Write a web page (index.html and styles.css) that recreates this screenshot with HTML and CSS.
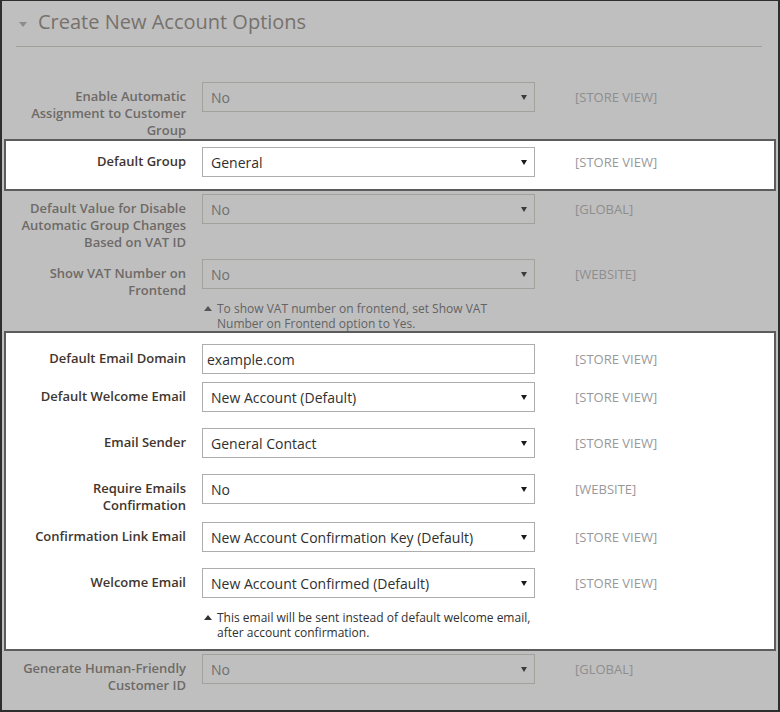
FILE: index.html
```html
<!DOCTYPE html>
<html lang="en">
<head>
<meta charset="utf-8">
<title>Create New Account Options</title>
<link rel="stylesheet" href="styles.css">
</head>
<body>
<div class="frame">
  <div class="header">
    <span class="caret"></span>
    <h2 class="title">Create New Account Options</h2>
  </div>
  <div class="rows">
    <div class="row row--flush">
      <div class="label">Enable Automatic<br>Assignment to Customer<br>Group</div>
      <div class="control"><div class="select"><span>No</span><span class="arrow"></span></div></div>
      <div class="scope">[STORE VIEW]</div>
    </div>

    <div class="box box--group">
      <div class="row row--flush">
        <div class="label">Default Group</div>
        <div class="control"><div class="select"><span>General</span><span class="arrow"></span></div></div>
        <div class="scope">[STORE VIEW]</div>
      </div>
    </div>

    <div class="row">
      <div class="label">Default Value for Disable<br>Automatic Group Changes<br>Based on VAT ID</div>
      <div class="control"><div class="select"><span>No</span><span class="arrow"></span></div></div>
      <div class="scope">[GLOBAL]</div>
    </div>

    <div class="row row--flush">
      <div class="label">Show VAT Number on<br>Frontend</div>
      <div class="control">
        <div class="select"><span>No</span><span class="arrow"></span></div>
        <div class="note"><span class="note-icon"></span><span>To show VAT number on frontend, set Show VAT<br>Number on Frontend option to Yes.</span></div>
      </div>
      <div class="scope">[WEBSITE]</div>
    </div>

    <div class="box box--email">
      <div class="row row--tight">
        <div class="label">Default Email Domain</div>
        <div class="control"><div class="input">example.com</div></div>
        <div class="scope">[STORE VIEW]</div>
      </div>
      <div class="row">
        <div class="label">Default Welcome Email</div>
        <div class="control"><div class="select"><span>New Account (Default)</span><span class="arrow"></span></div></div>
        <div class="scope">[STORE VIEW]</div>
      </div>
      <div class="row">
        <div class="label">Email Sender</div>
        <div class="control"><div class="select"><span>General Contact</span><span class="arrow"></span></div></div>
        <div class="scope">[STORE VIEW]</div>
      </div>
      <div class="row">
        <div class="label">Require Emails<br>Confirmation</div>
        <div class="control"><div class="select"><span>No</span><span class="arrow"></span></div></div>
        <div class="scope">[WEBSITE]</div>
      </div>
      <div class="row">
        <div class="label">Confirmation Link Email</div>
        <div class="control"><div class="select"><span>New Account Confirmation Key (Default)</span><span class="arrow"></span></div></div>
        <div class="scope">[STORE VIEW]</div>
      </div>
      <div class="row row--flush">
        <div class="label">Welcome Email</div>
        <div class="control">
          <div class="select"><span>New Account Confirmed (Default)</span><span class="arrow"></span></div>
          <div class="note"><span class="note-icon"></span><span>This email will be sent instead of default welcome email,<br>after account confirmation.</span></div>
        </div>
        <div class="scope">[STORE VIEW]</div>
      </div>
    </div>

    <div class="row">
      <div class="label">Generate Human-Friendly<br>Customer ID</div>
      <div class="control"><div class="select"><span>No</span><span class="arrow"></span></div></div>
      <div class="scope">[GLOBAL]</div>
    </div>
  </div>
</div>
</body>
</html>
```

FILE: styles.css
```css
body {
  margin: 0;
}

.frame {
  width: 780px;
  height: 712px;
  box-sizing: border-box;
  border: solid #2e2e2e;
  border-width: 1px 2px 2px 2px;
  background: #bfbfbf;
  padding: 0 16px 0 14px;
  font-family: "Open Sans", "Liberation Sans", sans-serif;
  overflow: hidden;
}

.header {
  display: flex;
  align-items: center;
  padding: 7px 0 10px;
  border-bottom: 1px solid #a19f99;
}

.caret {
  width: 0;
  height: 0;
  border-left: 4px solid transparent;
  border-right: 4px solid transparent;
  border-top: 5px solid #8c8c8c;
  margin: 5px 11px 0 3px;
}

.title {
  margin: 0;
  font-size: 20px;
  font-weight: 400;
  line-height: 28px;
  color: #77716c;
}

.rows {
  padding-top: 35px;
}

.row {
  display: grid;
  grid-template-columns: 170px 333px 1fr;
  column-gap: 16px;
  padding-bottom: 8px;
}

.label {
  padding-top: 6px;
  text-align: right;
  font-size: 13px;
  font-weight: 600;
  line-height: 17px;
  color: #6e6a67;
}

.control {
  padding-bottom: 8px;
}

.scope {
  padding: 6px 0 0 24px;
  font-size: 13px;
  line-height: 18px;
  color: #8e8e8e;
}

.row--flush {
  padding-bottom: 0;
}

.row--flush .control,
.row--tight .control {
  padding-bottom: 0;
}

.select,
.input {
  height: 30px;
  box-sizing: border-box;
  border: 1px solid #a3a19b;
  display: flex;
  align-items: center;
  font-size: 14px;
  color: #6f6f6f;
}

.select {
  justify-content: space-between;
  padding: 0 7px 0 8px;
}

.input {
  padding: 0 4px;
}

.arrow {
  width: 0;
  height: 0;
  border-left: 3px solid transparent;
  border-right: 3px solid transparent;
  border-top: 5px solid #3c3c3c;
}

.note {
  display: flex;
  margin-top: 12px;
  font-size: 12px;
  line-height: 15px;
  color: #636363;
}

.note-icon {
  flex: none;
  width: 0;
  height: 0;
  border-left: 4px solid transparent;
  border-right: 4px solid transparent;
  border-bottom: 5px solid #555555;
  margin: 5px 5px 0 2px;
}

.box {
  margin: 0 -14px 3px -12px;
  border: 2px solid #5c5c5c;
  background: #ffffff;
  padding-left: 10px;
  padding-right: 12px;
}

.box--group {
  padding-top: 6px;
  padding-bottom: 12px;
}

.box--email {
  padding-top: 11px;
  padding-bottom: 9px;
}

.box .label {
  color: #41362f;
}

.box .select,
.box .input {
  border-color: #adadad;
  color: #303030;
  background: #ffffff;
}

.box .arrow {
  border-top-color: #1a1a1a;
}

.box .scope {
  color: #999999;
}

.box .note {
  color: #303030;
}

.box .note-icon {
  border-bottom-color: #333333;
}
```
